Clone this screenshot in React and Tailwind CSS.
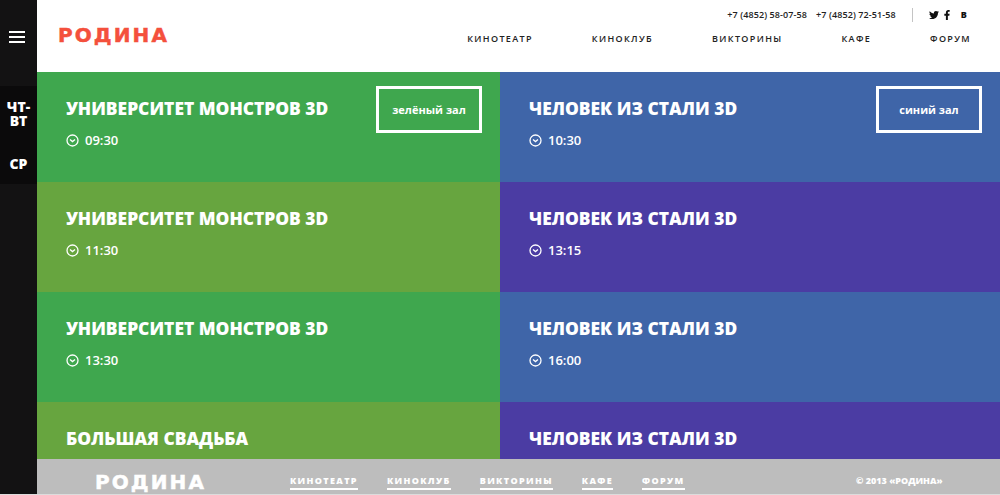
import React from 'react'
import { FaTwitter, FaFacebookF } from 'react-icons/fa'

const rows = [
  [
    { title: 'УНИВЕРСИТЕТ МОНСТРОВ 3D', time: '09:30', bg: 'bg-[#3fa74e]', hall: 'зелёный зал' },
    { title: 'ЧЕЛОВЕК ИЗ СТАЛИ 3D', time: '10:30', bg: 'bg-[#3f65a8]', hall: 'синий зал' },
  ],
  [
    { title: 'УНИВЕРСИТЕТ МОНСТРОВ 3D', time: '11:30', bg: 'bg-[#67a53f]' },
    { title: 'ЧЕЛОВЕК ИЗ СТАЛИ 3D', time: '13:15', bg: 'bg-[#4b3ca3]' },
  ],
  [
    { title: 'УНИВЕРСИТЕТ МОНСТРОВ 3D', time: '13:30', bg: 'bg-[#3fa74e]' },
    { title: 'ЧЕЛОВЕК ИЗ СТАЛИ 3D', time: '16:00', bg: 'bg-[#3f65a8]' },
  ],
  [
    { title: 'БОЛЬШАЯ СВАДЬБА', bg: 'bg-[#67a53f]' },
    { title: 'ЧЕЛОВЕК ИЗ СТАЛИ 3D', bg: 'bg-[#4b3ca3]' },
  ],
]

const nav = ['КИНОТЕАТР', 'КИНОКЛУБ', 'ВИКТОРИНЫ', 'КАФЕ', 'ФОРУМ']

function ClockIcon(){
  return (
    <svg width="13" height="13" viewBox="0 0 13 13" fill="none" stroke="white" className="shrink-0">
      <circle cx="6.5" cy="6.5" r="5.5" strokeWidth="1.3" />
      <path d="M4 5.4 L6.5 7.6 L9 5.4" strokeWidth="1.3" />
    </svg>
  )
}

function Session({ title, time, bg, hall }){
  return (
    <div className={`${bg} h-[110px] pl-[29px] pr-[18px] pt-[14px] flex justify-between items-start`}>
      <div>
        <div className="mt-[9px] text-[17.4px] leading-[26px] font-extrabold text-white whitespace-nowrap">{title}</div>
        {time && (
          <div className="mt-[9px] flex items-center gap-[6px] text-[13px] leading-[20px] font-semibold text-white">
            <ClockIcon />
            {time}
          </div>
        )}
      </div>
      {hall && (
        <div className="w-[106px] h-[47px] pt-px border-[3px] border-white flex items-center justify-center text-[11px] font-bold text-white">
          {hall}
        </div>
      )}
    </div>
  )
}

export default function App(){
  return (
    <div className="flex h-[495px] overflow-hidden bg-[#dcdcdc] font-['Open_Sans',sans-serif]">
      <aside className="w-[37px] h-[494px] shrink-0 bg-[#131213] text-white flex flex-col">
        <div className="mt-[31px] ml-[9px] w-[16px] flex flex-col gap-[3px]">
          <span className="h-[2px] bg-white"></span>
          <span className="h-[2px] bg-white"></span>
          <span className="h-[2px] bg-white"></span>
        </div>
        <div className="mt-[43px] h-[98px] pt-[14px] bg-[#0b0a0b] text-[14px] leading-[14px] font-extrabold text-center">
          <div>ЧТ-<br />ВТ</div>
          <div className="mt-[29px]">СР</div>
        </div>
      </aside>

      <div className="flex-1 h-[495px] flex flex-col min-w-0">
        <header className="h-[72px] shrink-0 bg-white flex justify-between pl-[21px] pr-[30px]">
          <div className="mt-[24px] h-[22px] w-[110px] whitespace-nowrap text-[#f4503c] text-[20px] leading-[22px] font-['DejaVu_Sans',sans-serif] font-bold tracking-[2.1px] [-webkit-text-stroke:0.5px_#f4503c]">РОДИНА</div>
          <div className="flex flex-col items-end">
            <div className="mt-[8px] h-[14px] flex items-center text-[#222] text-[9px] font-semibold tracking-[0.1px]">
              <span>+7 (4852) 58-07-58</span>
              <span className="ml-[9px]">+7 (4852) 72-51-58</span>
              <span className="ml-[16px] w-px h-[14px] bg-[#c4c4c4]"></span>
              <FaTwitter className="ml-[16px] text-[10px] text-[#111]" />
              <FaFacebookF className="ml-[3px] text-[10px] text-[#111]" />
              <span className="ml-[9px] mr-[3px] text-[9px] font-extrabold text-[#111]">В</span>
            </div>
            <nav className="mt-[10px] -mr-px flex gap-[59px] text-[#222] text-[9px] leading-[14px] font-semibold tracking-[1.35px]">
              {nav.map(item => <a key={item}>{item}</a>)}
            </nav>
          </div>
        </header>

        <main className="flex-1 min-h-0 overflow-hidden">
          <div className="grid grid-cols-[463px_500px]">
            {rows.flat().map((s, i) => <Session key={i} {...s} />)}
          </div>
        </main>

        <footer className="h-[35px] mb-px shrink-0 bg-[#bdbdbd] relative flex items-start text-white">
          <div className="ml-[58px] mt-[12px] h-[22px] w-[110px] whitespace-nowrap text-[20px] leading-[22px] font-['DejaVu_Sans',sans-serif] font-bold tracking-[2.1px] [-webkit-text-stroke:0.5px_white]">РОДИНА</div>
          <div className="ml-[85px] mt-[15px] flex gap-[29px] text-[9px] leading-[14px] font-extrabold tracking-[1.35px]">
            {nav.map(item => <a key={item} className="border-b-2 border-white">{item}</a>)}
          </div>
          <div className="absolute left-[819px] top-[15px] text-[9px] leading-[14px] font-extrabold">© 2013 «РОДИНА»</div>
        </footer>
      </div>
    </div>
  )
}
